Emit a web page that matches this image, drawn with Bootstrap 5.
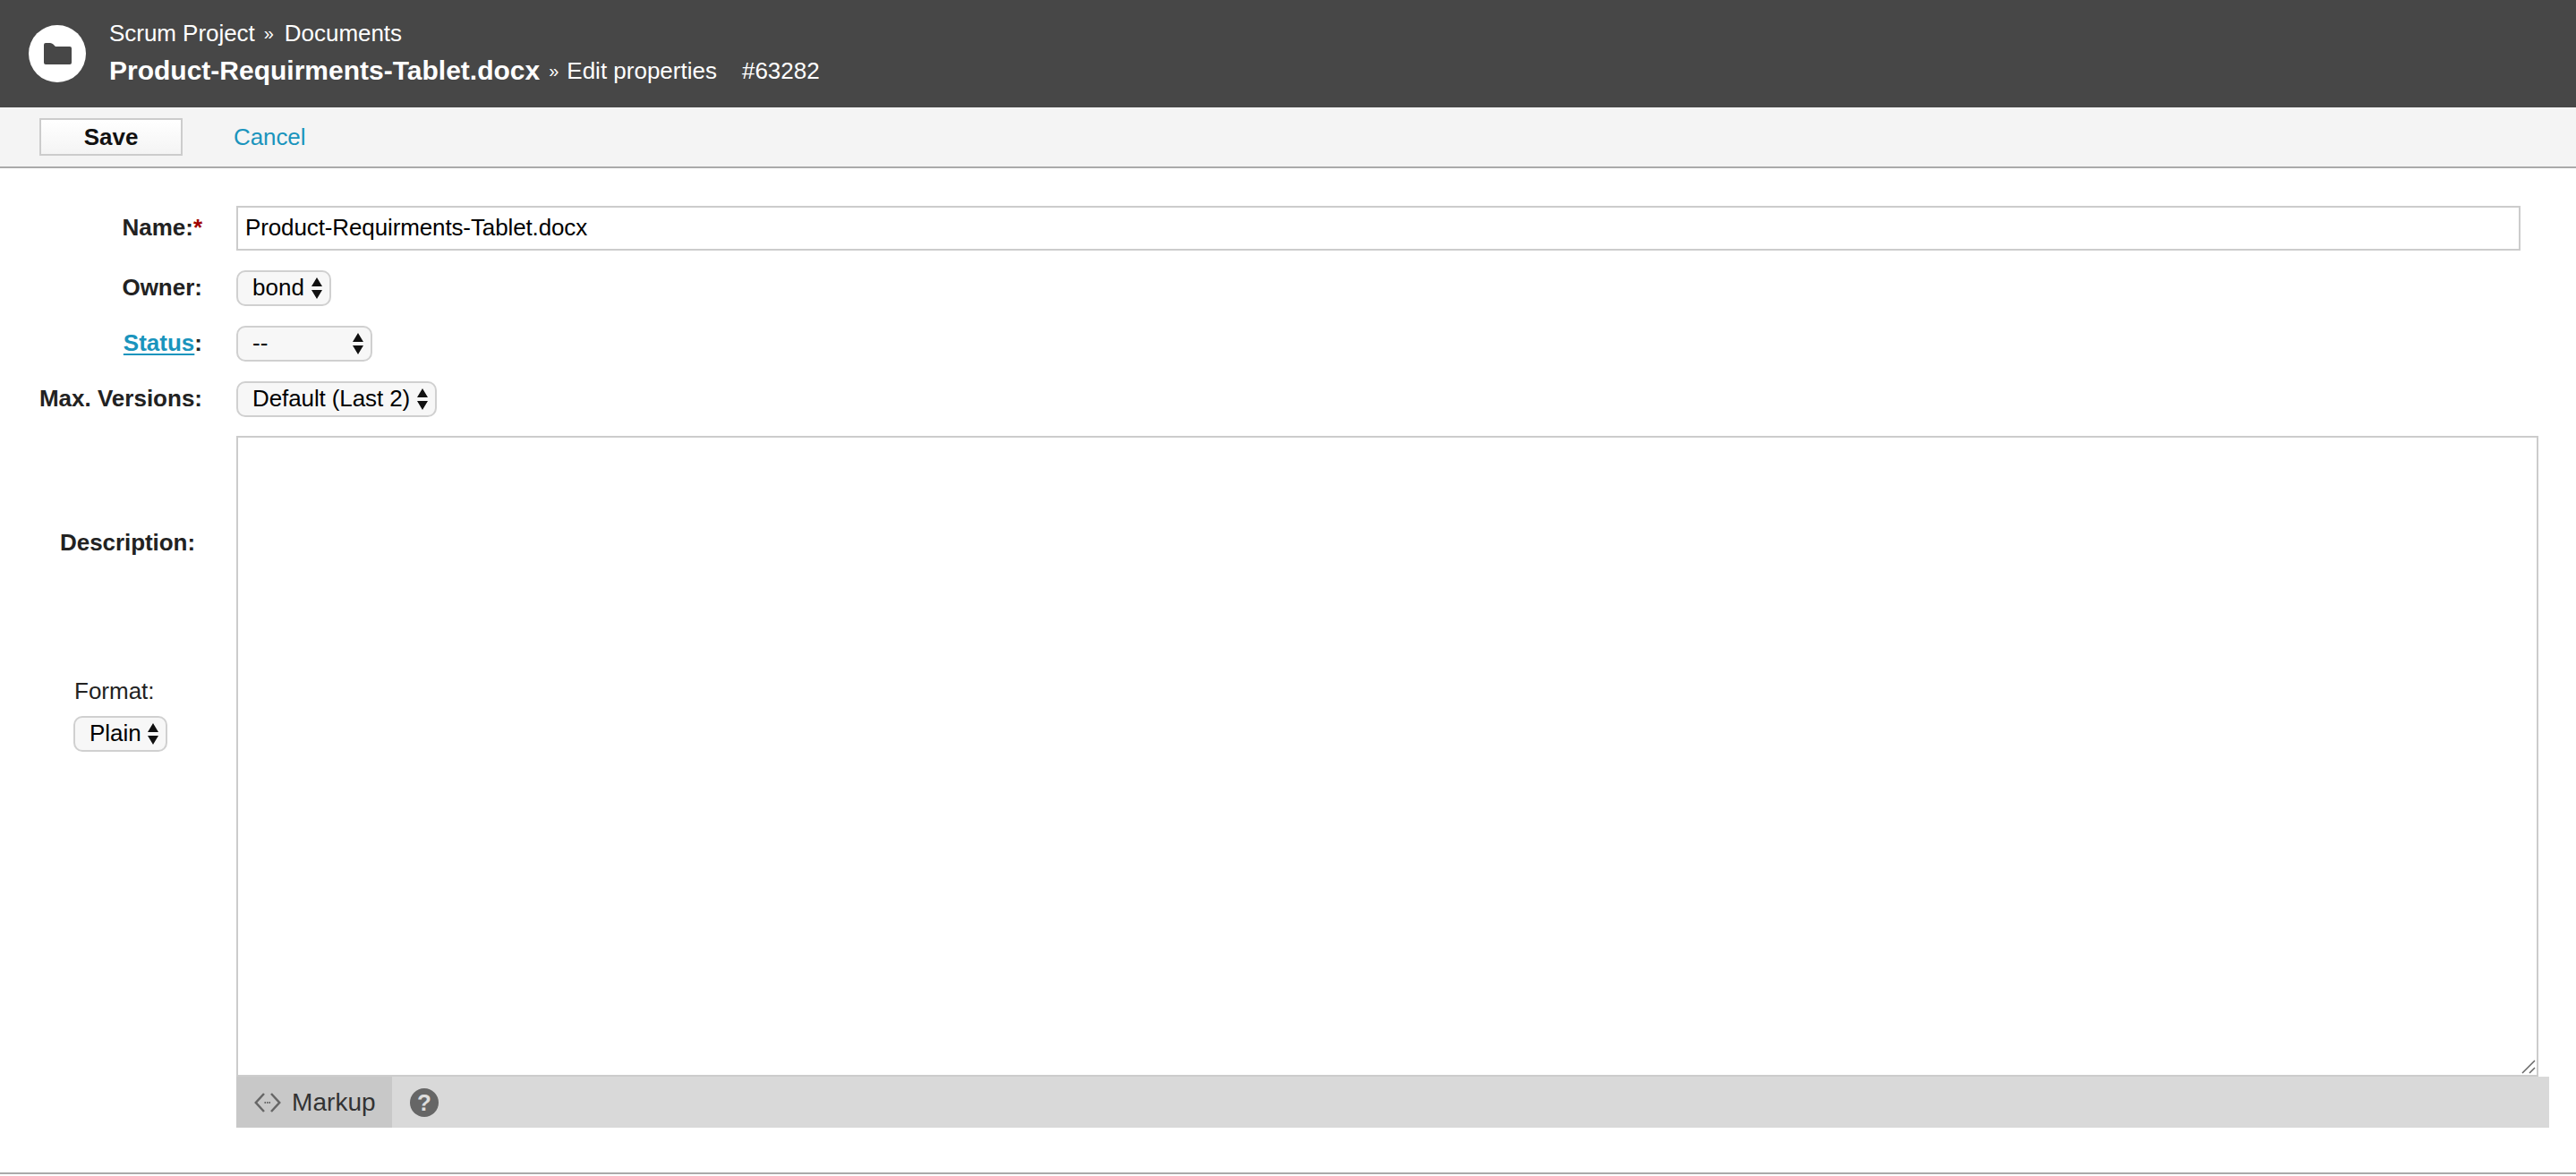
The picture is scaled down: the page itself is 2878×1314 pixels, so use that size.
<!DOCTYPE html>
<html lang="en">
<head>
<meta charset="utf-8">
<title>Edit properties</title>
<link href="https://cdn.jsdelivr.net/npm/bootstrap@5.3.0/dist/css/bootstrap.min.css" rel="stylesheet">
<style>
html,body{height:1314px;overflow:hidden;background:#fff}
body{font-family:"Liberation Sans",Arial,sans-serif;font-size:26px;line-height:30px;color:#222}
.hdr{height:120px;background:#474747;color:#fff;padding-left:32px;gap:26px}
.hdr-logo{width:64px;height:64px;background:#fff;flex:none}
.hdr-crumb{margin-top:-3px;height:38px;align-items:center;letter-spacing:-.04px}
.crumb-sep{font-size:20px;margin:0 12px 0 10px}
.hdr-title{height:42px;align-items:center;margin-top:2px}
.hdr-name{font-size:30px;font-weight:700}
.sep{font-size:20px;margin:0 9px 0 10px}
.hdr-id{margin-left:28px}
.tbar{height:68px;background:#f4f4f4;border-bottom:2px solid #aaa;padding-left:44px;align-items:center}
.save-btn{width:160px;height:42px;padding:0;border:2px solid #ccc;border-radius:0;background:linear-gradient(#fff,#f4f4f4);font-size:26px;font-weight:700;color:#111;line-height:36px}
.save-btn:hover{background:#fff;border-color:#ccc;color:#111}
.cancel-lnk{margin-left:57px;margin-bottom:1px;color:#1a94bd;text-decoration:none;letter-spacing:-.1px}
.frm{padding-top:42px;height:1124px;border-bottom:2px solid #aaa}
.frow{display:flex;margin-bottom:22px;align-items:center}
.frow .lbl{width:226px;flex:none;text-align:right;font-weight:700;margin:-2px 0 0}
.fld{margin-left:38px}
.req{color:#a00000}
.lnk{color:#1a94bd;text-decoration:underline;text-underline-offset:3px;text-decoration-thickness:2px}
.name-in{width:2552px;height:50px;border:2px solid #ccc;border-radius:0;padding:0 8px 2px;font-size:26px;color:#000;line-height:30px;letter-spacing:-.12px}
.name-in:focus{border-color:#ccc;box-shadow:none}
.sel{display:block;height:40px;border:2px solid #d0d0d0;border-radius:10px;font-size:26px;line-height:30px;color:#000;padding:0 26px 2px 16px;background-color:#f7f7f7;background-position:right 7px center;background-size:14px 26px;background-image:url("data:image/svg+xml,%3Csvg xmlns='http://www.w3.org/2000/svg' viewBox='0 0 14 26'%3E%3Cpath d='M7 1l6 10H1zM7 25L1 15h12z' fill='%23111'/%3E%3C/svg%3E")}
.sel:focus{border-color:#d0d0d0;box-shadow:none}
.sel-owner{width:106px}
.sel-status{width:152px}
.sel-max{width:224px;letter-spacing:-.1px}
.sel-fmt{width:105px}
.desc-row{margin-top:-1px}
.desc-left{width:226px;flex:none;padding-top:104px}
.desc-lbl{font-weight:700;text-align:right;padding-right:8px;margin:0;letter-spacing:-.06px}
.fmt-box{margin:136px 0 0 82px}
.fmt-lbl{display:block;margin-bottom:13px;margin-left:1px}
.desc-right{margin-left:38px;width:2584px}
.ta-wrap{width:2572px;height:716px}
.desc-ta{width:100%;height:100%;border:2px solid #ccc;border-radius:0;display:block;padding:4px 8px;resize:none}
.desc-ta:focus{border-color:#ccc;box-shadow:none}
.grip{position:absolute;right:2px;bottom:2px;display:block}
.mk-bar{height:57px;background:#d9d9d9;align-items:center}
.mk-tab{height:57px;width:174px;background:#c8c8c8;padding-left:20px;gap:12px;color:#333;align-items:center;font-size:28px;letter-spacing:.06px}
.mk-help{width:32px;height:32px;background:#666;color:#ddd;font-weight:700;font-size:26px;margin-left:20px;line-height:32px}
</style>
</head>
<body>
<header class="hdr d-flex align-items-center">
  <div class="hdr-logo rounded-circle d-flex align-items-center justify-content-center">
    <svg width="31" height="24" viewBox="0 0 31 24"><path d="M0 2q0-2 2-2h5q2 0 3.500 1.500L13 4h16q2 0 2 2v16q0 2-2 2H2q-2 0-2-2z" fill="#474747"/></svg>
  </div>
  <div>
    <div class="hdr-crumb d-flex"><span>Scrum Project</span><span class="crumb-sep">»</span><span>Documents</span></div>
    <div class="hdr-title d-flex"><span class="hdr-name">Product-Requirments-Tablet.docx</span><span class="sep">»</span><span>Edit properties</span><span class="hdr-id">#63282</span></div>
  </div>
</header>
<div class="tbar d-flex">
  <button type="button" class="btn save-btn">Save</button>
  <a href="#" class="cancel-lnk">Cancel</a>
</div>
<form class="frm">
  <div class="frow">
    <label class="lbl" for="nm">Name:<span class="req">*</span></label>
    <input id="nm" class="form-control fld name-in" type="text" value="Product-Requirments-Tablet.docx">
  </div>
  <div class="frow">
    <label class="lbl" for="ow">Owner:</label>
    <select id="ow" class="form-select fld sel sel-owner"><option>bond</option></select>
  </div>
  <div class="frow">
    <label class="lbl" for="st"><a href="#" class="lnk">Status</a>:</label>
    <select id="st" class="form-select fld sel sel-status"><option>--</option></select>
  </div>
  <div class="frow">
    <label class="lbl" for="mv">Max. Versions:</label>
    <select id="mv" class="form-select fld sel sel-max"><option>Default (Last 2)</option></select>
  </div>
  <div class="d-flex desc-row">
    <div class="desc-left">
      <label class="desc-lbl d-block" for="ds">Description:</label>
      <div class="fmt-box">
        <label class="fmt-lbl" for="fm">Format:</label>
        <select id="fm" class="form-select sel sel-fmt"><option>Plain</option></select>
      </div>
    </div>
    <div class="desc-right">
      <div class="ta-wrap position-relative">
        <textarea id="ds" class="form-control desc-ta"></textarea>
        <svg class="grip" width="18" height="18" viewBox="0 0 18 18" fill="none" stroke="#666" stroke-width="1.500"><path d="M2 16L16 2M10 16l6-6"/></svg>
      </div>
      <div class="mk-bar d-flex">
        <div class="mk-tab d-flex">
          <svg width="30" height="22" viewBox="0 0 30 22" fill="none" stroke="#666" stroke-width="2.500"><path d="M11 1L1.800 11 11 21M19 1l9.200 10L19 21"/><path d="M11.500 11h2M14 11h2M16.500 11h2" stroke-width="2" stroke-dasharray="1.500 1"/></svg>
          <span>Markup</span>
        </div>
        <div class="mk-help rounded-circle text-center">?</div>
      </div>
    </div>
  </div>
</form>
</body>
</html>
